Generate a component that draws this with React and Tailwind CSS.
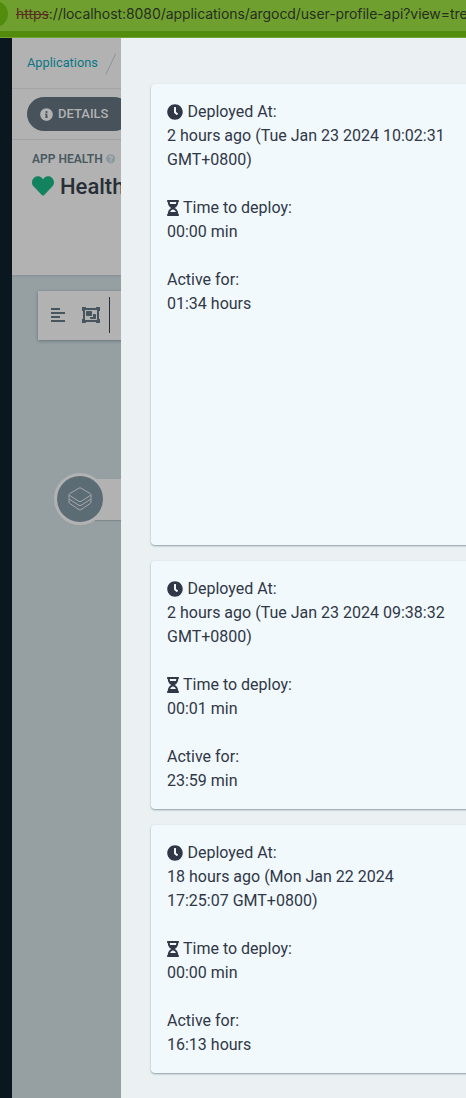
import React from 'react';
import { FaClock, FaHourglassHalf, FaInfoCircle, FaQuestionCircle, FaHeart } from 'react-icons/fa';

const deployments = [
  { at: '2 hours ago (Tue Jan 23 2024 10:02:31 GMT+0800)', deploy: '00:00 min', active: '01:34 hours', height: 'h-[461px]' },
  { at: '2 hours ago (Tue Jan 23 2024 09:38:32 GMT+0800)', deploy: '00:01 min', active: '23:59 min', height: 'h-[248px]' },
  { at: '18 hours ago (Mon Jan 22 2024 17:25:07 GMT+0800)', deploy: '00:00 min', active: '16:13 hours', height: 'h-[248px]' },
];

function AddressBar() {
  return (
    <header className="flex h-[38px] shrink-0 flex-col overflow-hidden border-b border-[#72a233] bg-[#538b0c]">
      <div className="flex h-[31px] items-center bg-[#6fa02f] pb-[3px]">
        <span className="-ml-[18px] mr-2 size-[26px] shrink-0 rounded-full bg-[#538b0c]" />
        <span className="whitespace-nowrap font-[Inter,sans-serif] text-[14px] leading-5 tracking-[-0.06px] text-[#272e20]">
          <span className="text-[#592d22] line-through decoration-1">https</span>
          ://localhost:8080/applications/argocd/user-profile-api?view=tree
        </span>
      </div>
    </header>
  );
}

function AlignIcon() {
  return (
    <svg className="shrink-0" width="14" height="14" viewBox="0 0 14 14" fill="currentColor">
      <path d="M0 0h9v2H0zM0 4h14v2H0zM0 8h9v2H0zM0 12h14v2H0z" />
    </svg>
  );
}

function GroupIcon() {
  return (
    <svg className="block shrink-0" width="18" height="16" viewBox="0 0 18 16" fill="currentColor">
      <path fillRule="evenodd" d="M0 0h4v1h10V0h4v4h-1v8h1v4h-4v-1H4v1H0v-4h1V4H0zM3 3v10h12V3z" />
      <rect x="4" y="4" width="6" height="5" rx="0.8" />
      <path d="M11 7h2.200q.8 0 .8.8v3.400q0 .8-.8.8H8.800q-.8 0-.8-.8V10h3z" />
    </svg>
  );
}

function LayersIcon() {
  return (
    <svg width="24" height="24" viewBox="0 0 24 24" fill="none" stroke="#adb0b1" strokeWidth="0.9" strokeLinejoin="round">
      <path d="M11 1.100q1-.6 2 0L22.500 6.800q1.200.8 0 1.600L13 14.400q-1 .6-2 0L1.500 8.400Q.3 7.600 1.500 6.800z" />
      <path d="M1 8v3.300q0 .6.600 1L11 18.400q1 .6 2 0l9.400-6.100q.6-.4.600-1V8" />
      <path d="M1 12v3.300q0 .6.600 1L11 22.600q1 .6 2 0l9.400-6.300q.6-.4.600-1V12" />
    </svg>
  );
}

function ApplicationPage() {
  return (
    <main className="flex w-[109px] shrink-0 flex-col overflow-hidden bg-[#969fa2]">
      <nav className="flex h-[51px] shrink-0 items-center border-b border-[#a2a5a8] bg-[#b2b2b2] pl-[15px] text-[12.800px] text-[#0b7685]">
        <span className="w-[78px] shrink-0">Applications</span>
        <svg className="mt-[1px] shrink-0" width="12" height="22" viewBox="0 0 12 22" stroke="#8e9498">
          <path d="M.8 21.500 10.800.5" />
        </svg>
      </nav>
      <div className="flex h-[51px] shrink-0 items-center border-b border-[#a2a5a8] bg-[#b2b2b2] pl-[15px]">
        <button className="flex h-[34px] w-[104px] shrink-0 items-center gap-[5px] rounded-full bg-[#47525a] pl-[13px] text-[13px] font-medium text-[#b2b2b2]">
          <FaInfoCircle className="size-[13px]" />
          DETAILS
        </button>
      </div>
      <section className="h-[135px] shrink-0 bg-[#b2b2b2] pl-5 pt-[11px] shadow-[0_1px_2px_rgba(70,85,92,0.25)]">
        <div className="flex h-4 items-center gap-[3px] whitespace-nowrap text-[12px] font-semibold text-[#485960]">
          APP HEALTH
          <FaQuestionCircle className="size-[9.500px] shrink-0 text-[#8b989e]" />
        </div>
        <div className="mt-[3px] flex h-8 items-center gap-[6px] text-[22px] font-medium text-[#282e37]">
          <FaHeart className="size-[22px] shrink-0 text-[#13835f]" />
          Healthy
        </div>
      </section>
      <div className="ml-[26px] mt-4 flex h-[49px] w-[200px] shrink-0 items-center bg-[#b2b2b2] pb-[2px] pl-[13px] text-[#47565e] shadow-[0_1px_3px_rgba(60,80,90,0.55)]">
        <AlignIcon />
        <span className="ml-[17px]"><GroupIcon /></span>
        <span className="ml-[9px] h-9 w-px bg-[#263039]" />
      </div>
      <div className="ml-[41.500px] mt-[133px] flex shrink-0 items-center">
        <div className="z-10 flex size-[52px] shrink-0 items-center justify-center rounded-full border-[3px] border-[#b2b2b2] bg-[#5b6c74]">
          <LayersIcon />
        </div>
        <div className="-ml-4 mt-[1px] h-[41px] w-40 shrink-0 bg-[#b2b2b2] shadow-[0_1px_1px_#7f8b90]" />
      </div>
    </main>
  );
}

function DeploymentCard({ item }) {
  return (
    <article className={`${item.height} w-[340px] shrink-0 rounded bg-[#f1f9fd] p-4 shadow-[0_1px_2px_rgba(90,115,127,0.65)]`}>
      <div className="w-[290px]">
        <p className="flex items-center gap-[4.500px]">
          <FaClock className="-mt-px size-4 shrink-0" />
          Deployed At:
        </p>
        <p>{item.at}</p>
      </div>
      <div className="mt-6">
        <p className="flex items-center gap-1">
          <FaHourglassHalf className="-mt-px h-4 w-3 shrink-0" />
          Time to deploy:
        </p>
        <p>{item.deploy}</p>
      </div>
      <div className="mt-6">
        <p>Active for:</p>
        <p>{item.active}</p>
      </div>
    </article>
  );
}

export default function App() {
  return (
    <div className="flex h-[1098px] w-[466px] flex-col overflow-hidden font-[Roboto,sans-serif]">
      <AddressBar />
      <div className="flex min-h-0 flex-1">
        <aside className="w-3 shrink-0 bg-[#0a171e]" />
        <ApplicationPage />
        <section className="flex min-w-0 flex-1 flex-col gap-4 overflow-hidden bg-[#ebf0f3] pl-[30px] pt-[46px] text-[16px] leading-6 text-[#303746]">
          {deployments.map((item) => <DeploymentCard key={item.at} item={item} />)}
        </section>
      </div>
    </div>
  );
}
